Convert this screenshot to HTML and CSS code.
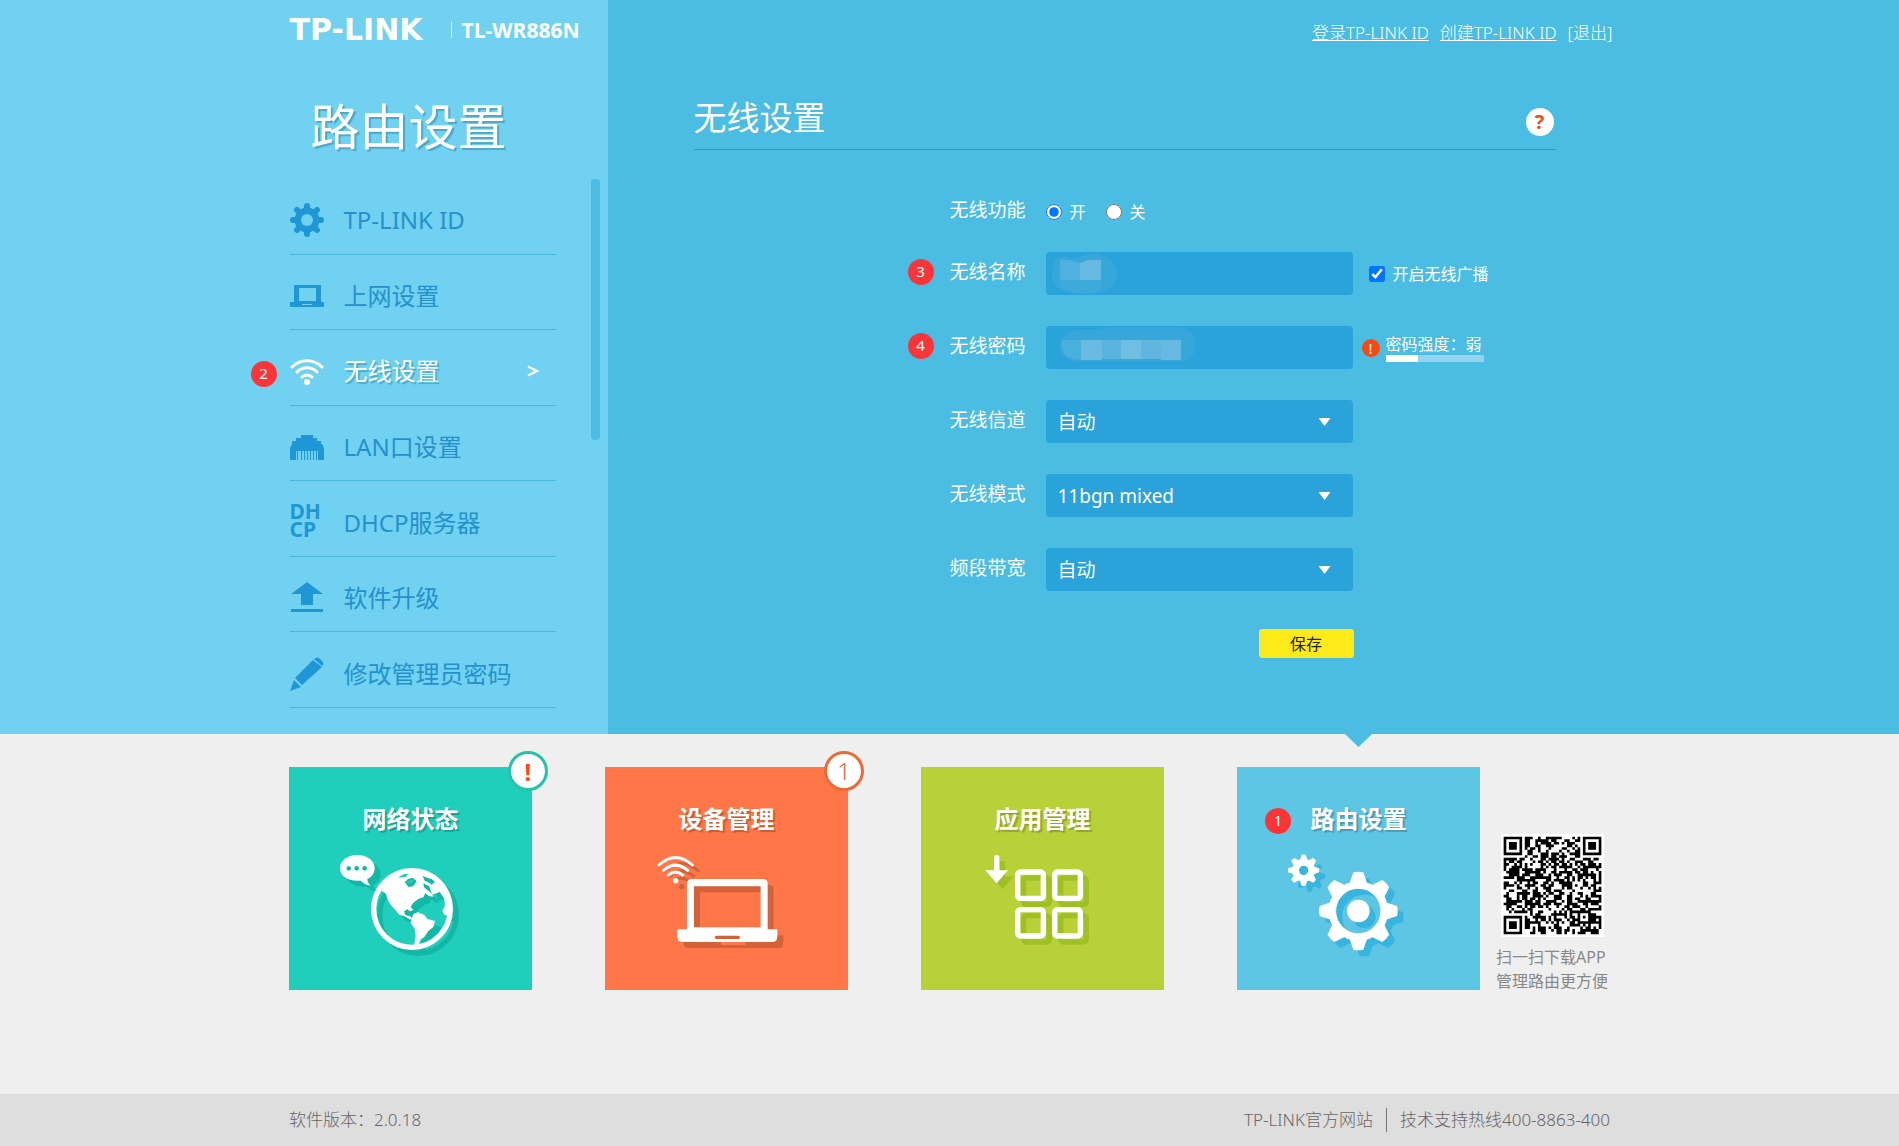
FILE: index.html
```html
<!DOCTYPE html>
<html lang="zh-CN">
<head>
<meta charset="utf-8">
<meta name="viewport" content="width=device-width, initial-scale=1">
<title>TL-WR886N</title>
<link rel="stylesheet" href="styles.css">
</head>
<body>
<div class="hero">
  <aside class="side">
    <div class="side-inner">
      <div class="brand"><span class="brand-name">TP-LINK</span><span class="brand-model">TL-WR886N</span></div>
      <h1 class="side-title">路由设置</h1>
      <div class="menu-wrap">
        <ul class="menu">
          <li><a href="#"><svg class="mi" viewBox="0 0 34 34"><g stroke="currentColor" stroke-width="6" stroke-linecap="round"><path d="M17 3v28M3 17h28M7 7l20 20M27 7L7 27"/></g><circle cx="17" cy="17" r="9" fill="none" stroke="currentColor" stroke-width="7"/><circle cx="17" cy="17" r="6" fill="#70d2f0"/></svg>TP-LINK ID</a></li>
          <li><a href="#"><svg class="mi" viewBox="0 0 34 34"><path fill="currentColor" fill-rule="evenodd" d="M4 6h27v17h3v5H0v-5h4zM9 9v13h17V9zM12 25v1h10v-1z"/></svg>上网设置</a></li>
          <li class="active"><span class="mark mark-menu">2</span><a href="#"><svg class="mi" viewBox="0 0 34 34"><g fill="none" stroke="currentColor" stroke-width="3" stroke-linecap="round"><path d="M2 13a21 21 0 0 1 30 0M7 18a14 14 0 0 1 20 0M12 23a7 7 0 0 1 10 0"/></g><circle cx="17" cy="28" r="3" fill="currentColor"/></svg>无线设置<svg class="go" viewBox="0 0 12 12"><path d="M1 1.500l9 4.500-9 4.500" fill="none" stroke="currentColor" stroke-width="2.400"/></svg></a></li>
          <li><a href="#"><svg class="mi" viewBox="0 0 34 34"><path fill="currentColor" d="M11 5h12v3h4v3h4v3h1l2 4v12h-6v-9h-1v9h-1v-9h-2v9h-1v-9h-2v9h-1v-9h-2v9h-1v-9h-2v9h-1v-9h-2v9h-1v-9H8v9H7v-9H6v9H0V18l2-4v-3h4V8h5z"/></svg>LAN口设置</a></li>
          <li><a href="#"><span class="mi dhcp"><span>DH</span><span>CP</span></span>DHCP服务器</a></li>
          <li><a href="#"><svg class="mi" viewBox="0 0 34 34"><path fill="currentColor" d="M17 1l16 12H23v11H11V13H1zM1 28h32v3H1z"/></svg>软件升级</a></li>
          <li><a href="#"><svg class="mi" viewBox="0 0 34 34"><path fill="currentColor" d="M23 3l9 7L12 28 5 21zM24 2l2-1q1-1 3 0l4 4q1 2 0 3l-1 1zM4 23l7 7-11 4z"/></svg>修改管理员密码</a></li>
        </ul>
        <div class="scroll"></div>
      </div>
    </div>
  </aside>
  <main class="main">
    <nav class="top"><a href="#">登录TP-LINK ID</a><a href="#">创建TP-LINK ID</a><a class="quit" href="#">[退出]</a></nav>
    <header class="head"><h2>无线设置</h2><button class="help" type="button" aria-label="帮助">?</button></header>
    <form class="form">
      <div class="row row-radio">
        <span class="lab" id="wl">无线功能</span>
        <div class="radios" role="radiogroup" aria-labelledby="wl">
          <label><input type="radio" name="wl" checked>开</label>
          <label><input type="radio" name="wl">关</label>
        </div>
      </div>
      <div class="row">
        <span class="mark mark-form">3</span>
        <label class="lab" for="ssid">无线名称</label>
        <div class="field"><input id="ssid" type="text">
          <svg class="mask" viewBox="0 0 307 43"><path fill="#36a7da" d="M8 12q2-10 14-7 6 4 12 0 14-7 26 0 12 8 11 18-2 16-17 17-12 4-26 1Q6 39 6 23z"/><path fill="#50b0df" d="M14 8q10-1 20 3v17H14z"/><path fill="#66b9e1" d="M34 11l8-3h13v20H34z"/><path fill="#3caadb" d="M14 28h20v13q-14-1-20-6zM34 28h21v10q-8 4-21 3z"/></svg>
        </div>
        <label class="bcast"><input type="checkbox" checked>开启无线广播</label>
      </div>
      <div class="row">
        <span class="mark mark-form">4</span>
        <label class="lab" for="pwd">无线密码</label>
        <div class="field"><input id="pwd" type="password">
          <svg class="mask" viewBox="0 0 307 43"><path fill="#36a7da" d="M14 19Q16 5 34 4h20q4-3 12-3h62q20 0 22 17-1 16-16 17H32q-17-1-18-12z"/><path fill="#49afdd" d="M15 14h20v20q-14 0-18-8z"/><path fill="#6abbe2" d="M35 14h21v20H35z"/><path fill="#5bb4df" d="M56 14h19v19H56z"/><path fill="#70bfe3" d="M75 14h20v19H75z"/><path fill="#60b6df" d="M95 14h20v19H95z"/><path fill="#68b9e1" d="M115 14h20v20h-20z"/></svg>
        </div>
        <div class="strength"><span class="warn">!</span><div class="level"><span>密码强度：弱</span><div class="bar"><i></i></div></div></div>
      </div>
      <div class="row"><label class="lab" for="ch">无线信道</label><div class="field sel"><select id="ch"><option>自动</option></select></div></div>
      <div class="row"><label class="lab" for="mode">无线模式</label><div class="field sel"><select id="mode"><option>11bgn mixed</option></select></div></div>
      <div class="row"><label class="lab" for="bw">频段带宽</label><div class="field sel"><select id="bw"><option>自动</option></select></div></div>
      <button class="save" type="button">保存</button>
    </form>
  </main>
</div>

<div class="dock">
  <a class="card c-net" href="#"><span class="title">网络状态</span><span class="bubble alert">!</span>
    <svg viewBox="57 381 729 339"><path fill="#fff" fill-rule="evenodd" d="M262 405c30 0 52 17 52 39 0 15-9 27-22 33 0 8 4 14 10 20-13-2-23-8-29-15-40 4-63-15-63-38 0-22 22-39 52-39zM236 438a7 7 0 1 0 .1 0zM260 438a7 7 0 1 0 .1 0zM284 438a7 7 0 1 0 .1 0z"/><circle cx="426" cy="567" r="115" fill="none" stroke="#fff" stroke-width="16"/><path fill="#fff" d="M340 498l20-24 20-12 28-7-8 8-16 10 24-3 8-10 22-8 40 8 20 14-18 2-22-8 6 14 16 8 8 13-12-5-16-8 2 12 22 18 6 10-14-2-10-8-6 12-14 4-16 12-8 12 8 10-10 4-8-6-10 6 4 12 14 2 8 12-12-4-14-8-14-4-14-16-14-16-8-16-4-14-12-10zM404 487l12 14 14-2 10-16-12-10-14 4zM430 582l14-5 20 8 8 12 23 6-5 18-15 12-12 18-12 8-6 20-14 3 6-34-3-22-12-18zM478 500l24-20 22 30 13 50-2 28-12-4-6-12 8-14-2-22-14-20-22 8z"/></svg></a>
  <a class="card c-dev" href="#"><span class="title">设备管理</span><span class="bubble count">1</span>
    <svg viewBox="45 381 729 339"><g fill="none" stroke="#fff" stroke-width="9" stroke-linecap="round"><path d="M207 435q50-45 100 0M221 451q36-31 72 0M236 465q21-17 42 0"/></g><circle cx="257" cy="482" r="8" fill="#fff"/><path fill="#fff" fill-rule="evenodd" d="M305 477h214q14 0 14 14v137h29v22q0 16-16 16H278q-16 0-16-16v-22h29V491q0-14 14-14zM312 499v123h200V499zM379 647q-5 0-5 5t5 5h66q5 0 5-5t-5-5z"/></svg></a>
  <a class="card c-app" href="#"><span class="title">应用管理</span>
    <svg viewBox="33 381 729 339"><path fill="#fff" d="M252 412q0-7 8-7t8 7v39h26l-34 39-34-39h26z"/><g fill="none" stroke="#fff" stroke-width="16"><rect x="323" y="456" width="77" height="79" rx="8"/><rect x="434" y="456" width="77" height="79" rx="8"/><rect x="323" y="569" width="77" height="79" rx="8"/><rect x="434" y="569" width="77" height="79" rx="8"/></g></svg></a>
  <a class="card c-set" href="#"><span class="mark mark-card">1</span><span class="title">路由设置</span>
    <svg viewBox="51 381 729 339"><defs><g id="teeth"><path id="tooth" d="M-28-78l13-38q15-4 30 0l13 38z"/><use href="#tooth" transform="rotate(45)"/><use href="#tooth" transform="rotate(90)"/><use href="#tooth" transform="rotate(135)"/><use href="#tooth" transform="rotate(180)"/><use href="#tooth" transform="rotate(225)"/><use href="#tooth" transform="rotate(270)"/><use href="#tooth" transform="rotate(315)"/></g></defs><g transform="translate(415 573)" fill="#fff"><use href="#teeth"/><circle r="78" fill="none" stroke="#fff" stroke-width="23"/><circle r="34"/></g><g transform="translate(251 451) scale(.400)" fill="#fff"><use href="#teeth"/><circle r="60" fill="none" stroke="#fff" stroke-width="50"/></g></svg></a>
  <div class="app-qr"><svg id="qr" viewBox="-1 -1 39 39" role="img" aria-label="QR"><path fill="#fff" d="M-1-1h39v39H-1z"/></svg><p>扫一扫下载APP<br>管理路由更方便</p></div>
</div>

<footer class="foot"><div class="foot-inner"><span>软件版本：2.0.18</span><div class="foot-links"><a href="#">TP-LINK官方网站</a><span>技术支持热线400-8863-400</span></div></div></footer>
<script src="qr.js"></script>
</body>
</html>
```
FILE: styles.css
```css
* { box-sizing: border-box; }

body {
  margin: 0;
  min-height: 100vh;
  display: flex;
  flex-direction: column;
  background: #efefef;
  font: 400 16px/24px "Noto Sans", "Noto Sans CJK SC", sans-serif;
  color: #fff;
}

a { color: inherit; text-decoration: none; }
h1, h2, p, ul { margin: 0; padding: 0; font-weight: 400; }
input, select, button { font: inherit; color: inherit; margin: 0; border: 0; }

.hero {
  display: grid;
  grid-template-columns: calc(50% - 342px) 1fr;
  background: #4bbce2;
}

/* sidebar */
.side { display: flex; justify-content: flex-end; background: #70d2f0; }
.side-inner { width: 318px; padding: 14px 0 26px; }
.brand { display: flex; align-items: center; height: 32px; }
.brand-name { width: 161px; font: 700 30px/32px "DejaVu Sans", sans-serif; }
.brand-model {
  position: relative;
  padding-left: 11px;
  font: 700 21px/32px "Open Sans", sans-serif;
}
.brand-model::before {
  content: "";
  position: absolute;
  left: 0;
  top: 8px;
  height: 16px;
  border-left: 1px solid #fff;
}
.side-title {
  margin-top: 52px;
  padding-left: 21px;
  font-size: 49px;
  line-height: 56px;
  text-shadow: 2px 2px 1px #4ba9c8;
}
.menu-wrap { display: flex; justify-content: space-between; margin-top: 25px; padding-right: 8px; }
.menu { width: 266px; height: 529px; display: grid; grid-auto-rows: 1fr; list-style: none; }
.menu li { position: relative; border-bottom: 1px solid #4ab6da; }
.menu a {
  display: flex;
  align-items: center;
  height: 100%;
  padding-top: 8px;
  font-size: 24px;
  line-height: 36px;
  color: #2690cc;
}
.menu .active a { color: #fff; text-shadow: 2px 2px 1px #4ba9c8; }
.mi { flex: none; width: 34px; height: 34px; margin-right: 20px; color: #1f97d6; }
.active .mi { color: #fff; }
.dhcp {
  display: flex;
  flex-direction: column;
  height: 36px;
  margin-top: -6px;
  font: 700 21px/18px "Noto Sans", sans-serif;
}
.go { width: 12px; height: 12px; margin-left: auto; margin-right: 17px; }
.scroll { width: 9px; height: 261px; border-radius: 4px; background: #4bbce2; }

/* numbered steps */
.mark {
  position: absolute;
  width: 26px;
  height: 26px;
  border-radius: 50%;
  background: #fb3438;
  color: #fff;
  font-size: 15px;
  line-height: 25px;
  text-align: center;
}
.mark-menu { left: -39px; top: 31px; }
.mark-form { left: -42px; top: 7px; }
.mark-card { left: 28px; top: 41px; }

/* settings panel */
.main { width: 100%; max-width: 1005px; padding-top: 21px; }
.top { display: flex; justify-content: flex-end; gap: 11px; font-size: 17px; font-weight: 300; }
.top a { text-decoration: underline; }
.top .quit { text-decoration: none; }
.head {
  display: flex;
  justify-content: space-between;
  align-items: center;
  margin: 53px 57px 0 86px;
  padding-bottom: 11px;
  border-bottom: 1px solid #2a9dcf;
}
.head h2 { font-size: 33px; line-height: 40px; }
.help {
  width: 28px;
  height: 28px;
  margin: 8px 2px 0 0;
  padding: 0;
  border-radius: 50%;
  background: #fff;
  color: #fb4810;
  font-weight: 700;
  font-size: 20px;
  line-height: 28px;
}
.form {
  display: grid;
  grid-template-columns: 404px;
  gap: 31px;
  margin: 40px 0 0 342px;
}
.row { position: relative; display: flex; align-items: center; height: 43px; white-space: nowrap; }
.row-radio { margin-bottom: -12px; }
.lab { flex: none; width: 96px; padding-bottom: 3px; font-size: 19px; }
.radios, .radios label, .bcast, .strength { display: flex; align-items: center; }
.radios { gap: 20px; }
.radios input, .bcast input { width: 16px; height: 16px; margin-right: 8px; }
.field { position: relative; flex: none; width: 307px; height: 43px; }
.field input, .field select {
  width: 100%;
  height: 100%;
  padding: 0 12px;
  border-radius: 4px;
  background: #2aa2da;
  font-size: 19px;
  appearance: none;
}
.sel::after {
  content: "";
  position: absolute;
  right: 22px;
  top: 18px;
  width: 12px;
  height: 8px;
  background: #fff;
  clip-path: polygon(0 0, 100% 0, 50% 100%);
}
.mask { position: absolute; inset: 0; width: 100%; height: 100%; pointer-events: none; }
.bcast { margin-left: 16px; }
.strength { margin-left: 9px; gap: 6px; }
.warn {
  width: 18px;
  height: 18px;
  border-radius: 50%;
  background: #fb4810;
  font-size: 15px;
  line-height: 18px;
  text-align: center;
}
.level { width: 98px; line-height: 22px; }
.bar { height: 7px; background: #94d2ee; }
.bar i { display: block; width: 33%; height: 100%; background: #fff; }
.save {
  justify-self: end;
  width: 95px;
  height: 29px;
  margin-top: 7px;
  padding: 0;
  border-radius: 3px;
  background: #fdea18;
  color: #222;
}

/* section cards */
.dock {
  flex: 1;
  display: grid;
  grid-template-columns: repeat(4, 243px) auto;
  column-gap: 73px;
  align-items: start;
  width: 1321px;
  margin: 0 auto;
  padding: 33px 0 100px;
}
.card { position: relative; padding-top: 34px; text-align: center; }
.card .title {
  display: block;
  font-weight: 700;
  font-size: 24px;
  line-height: 36px;
  text-shadow: 2px 2px 1px rgb(0 0 0 / 22%);
}
.card svg {
  display: block;
  width: 243px;
  height: 113px;
  margin: 10px 0 30px;
  filter: drop-shadow(6px 6px 0 var(--shade));
}
.c-net { background: #1fcfbc; --shade: #12b8a5; }
.c-dev { background: #ff7648; --shade: #d46238; }
.c-app { background: #b8d138; --shade: #9fc022; }
.c-set { background: #5dc6e5; --shade: #38b5de; }
.c-set::before {
  content: "";
  position: absolute;
  left: 108px;
  top: -33px;
  width: 27px;
  height: 13px;
  background: #4bbce2;
  clip-path: polygon(0 0, 100% 0, 50% 100%);
}
.bubble {
  position: absolute;
  right: -16px;
  top: -16px;
  width: 40px;
  height: 40px;
  border: 3px solid;
  border-radius: 50%;
  background: #fff;
  font-size: 24px;
  line-height: 34px;
}
.alert { border-color: #25c4a8; color: #fb4820; font-weight: 700; line-height: 36px; }
.count { border-color: #ec6a35; color: #ee6a3c; font-weight: 300; }
.app-qr { margin: 67px 0 0 -57px; color: #888; }
.app-qr svg { display: block; width: 103px; height: 103px; margin-left: 5px; }
.app-qr p { margin-top: 8px; white-space: nowrap; }

.foot { background: #dedede; color: #666; font-size: 17px; font-weight: 300; }
.foot-inner { width: 1321px; margin: 0 auto; padding: 14px 0; display: flex; justify-content: space-between; }
.foot-links { display: flex; }
.foot-links a { padding-right: 13px; margin-right: 13px; border-right: 1px solid #777; }
```
FILE: qr.js
```js
// Fills the 37-module code: three finders, one alignment square, data modules.
const size = 37;
let seed = 20180;
const next = () => (seed = (seed * 1103515245 + 12345) % 2147483648) / 2147483648;
const ring = (x, y, cx, cy) => Math.max(Math.abs(x - cx), Math.abs(y - cy));
let d = "";
for (let y = 0; y < size; y++) {
  for (let x = 0; x < size; x++) {
    let on = next() < 0.54;
    for (const [cx, cy] of [[3, 3], [33, 3], [3, 33]]) {
      const r = ring(x, y, cx, cy);
      if (r <= 4) on = r !== 2 && r !== 4;
    }
    const a = ring(x, y, 30, 30);
    if (a <= 2) on = a !== 1;
    if (on) d += `M${x} ${y}h1v1h-1z`;
  }
}
const path = document.createElementNS("http://www.w3.org/2000/svg", "path");
path.setAttribute("d", d);
path.setAttribute("fill", "#000");
document.getElementById("qr").append(path);
```
